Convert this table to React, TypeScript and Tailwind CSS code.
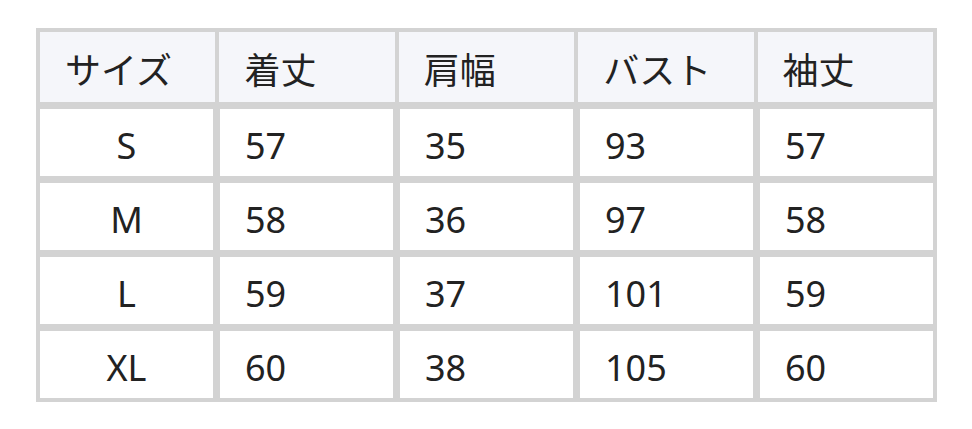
const headers = ['サイズ', '着丈', '肩幅', 'バスト', '袖丈'];

const rows = [
  ['S', '57', '35', '93', '57'],
  ['M', '58', '36', '97', '58'],
  ['L', '59', '37', '101', '59'],
  ['XL', '60', '38', '105', '60'],
];

export default function App() {
  return (
    <div
      className="w-[972px] h-[429px] bg-white pt-[28px] pl-[36px] text-[#222222] font-normal"
      style={{ fontFamily: '"Noto Sans", "Noto Sans CJK JP", sans-serif' }}
    >
      <div className="w-[901px] bg-[#d3d3d3] p-[4px] flex flex-col gap-[7px]">
        <div className="grid grid-cols-5 gap-[4px] h-[70px]">
          {headers.map((h) => (
            <div key={h} className="bg-[#f5f6fa] flex items-center pl-[25px] pt-[8px] text-[36px] leading-none">
              {h}
            </div>
          ))}
        </div>
        {rows.map((row) => (
          <div key={row[0]} className="grid grid-cols-5 gap-[7px] h-[67px]">
            {row.map((cell, i) => (
              <div
                key={i}
                className={`bg-white flex items-center pt-[7px] text-[36px] leading-none ${i === 0 ? 'justify-center' : 'pl-[25px]'}`}
              >
                {cell}
              </div>
            ))}
          </div>
        ))}
      </div>
    </div>
  );
}
